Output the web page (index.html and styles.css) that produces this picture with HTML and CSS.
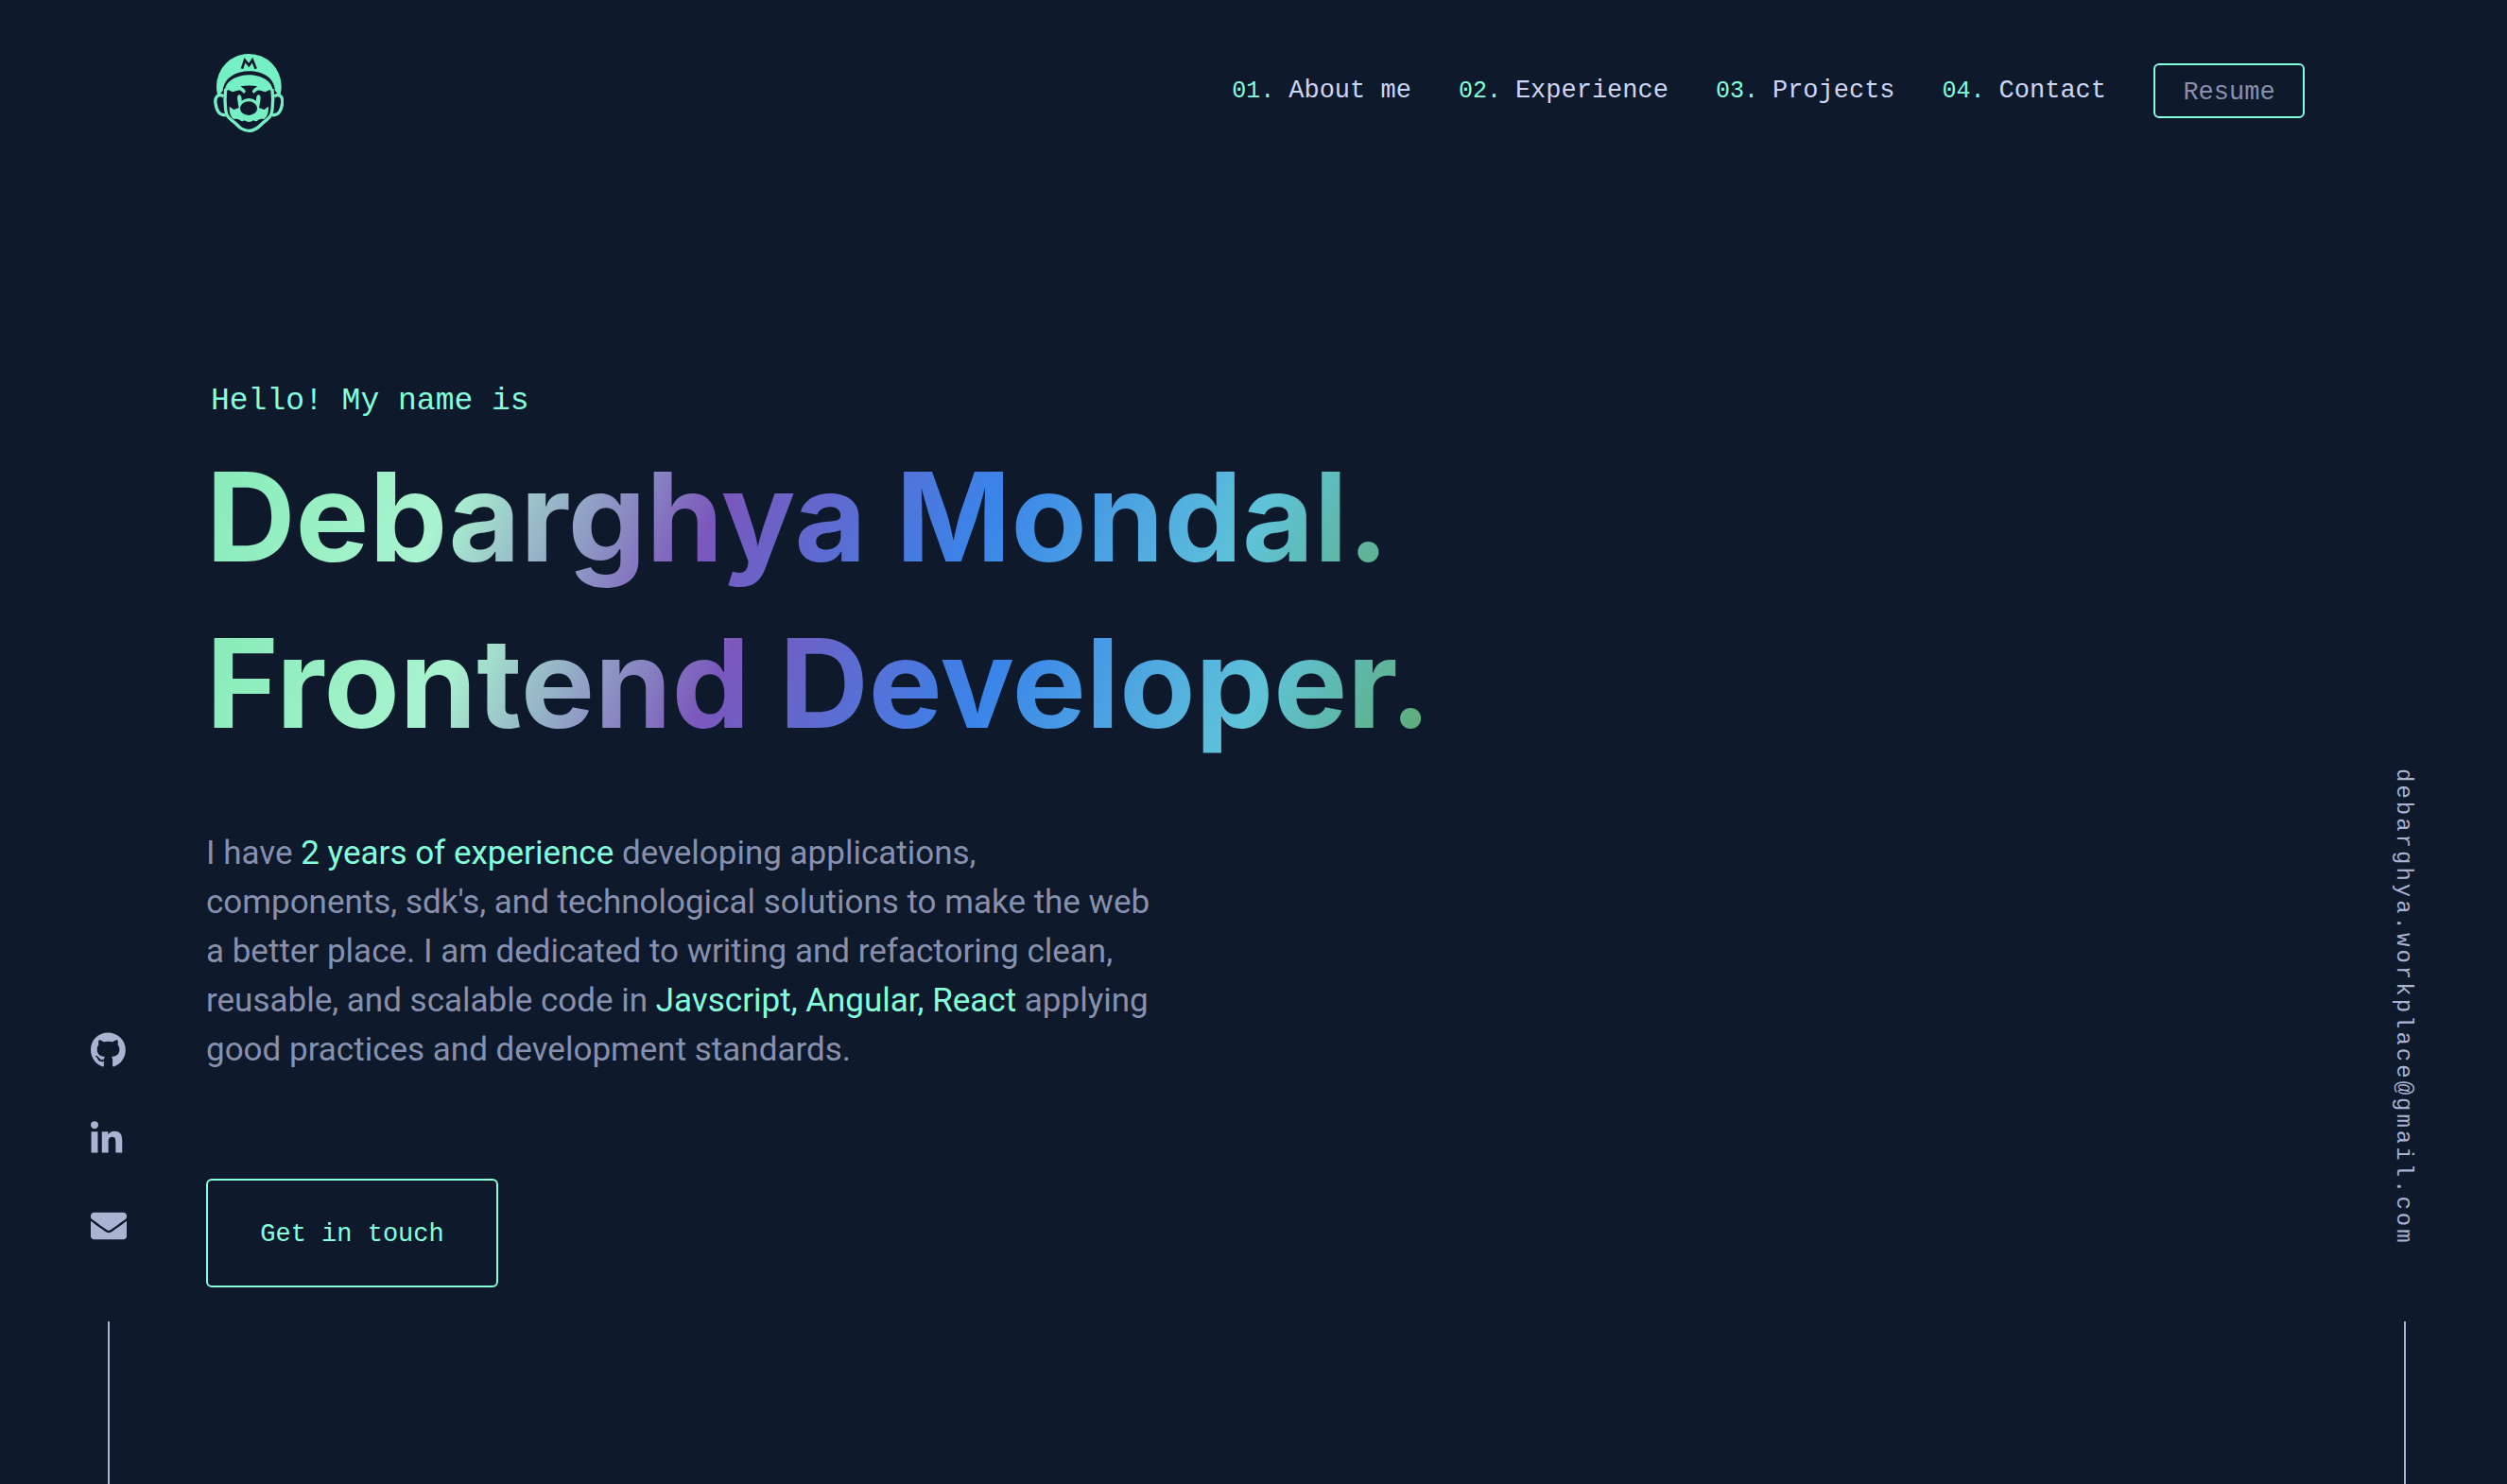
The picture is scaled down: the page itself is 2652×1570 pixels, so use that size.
FILE: index.html
```html
<!DOCTYPE html>
<html lang="en">
<head>
<meta charset="utf-8">
<title>Debarghya Mondal</title>
<link rel="stylesheet" href="styles.css">
</head>
<body class="page">
<aside class="rail rail-left" aria-label="Social links">
  <a href="#github" aria-label="GitHub"><svg class="icon" viewBox="0 0 512 512"><path d="M165.9 397.4c0 2-2.3 3.6-5.2 3.6-3.3.3-5.6-1.3-5.6-3.6 0-2 2.3-3.6 5.2-3.6 3-.3 5.6 1.3 5.6 3.6zm-31.1-4.5c-.7 2 1.3 4.3 4.3 4.9 2.6 1 5.6 0 6.2-2s-1.3-4.3-4.3-5.2c-2.6-.7-5.5.3-6.2 2.3zm44.2-1.7c-2.9.7-4.9 2.6-4.6 4.9.3 2 2.9 3.3 5.9 2.6 2.9-.7 4.9-2.6 4.6-4.6-.3-1.9-3-3.2-5.9-2.9zM244.8 8C106.1 8 0 113.3 0 252c0 110.9 69.8 205.8 169.5 239.2 12.8 2.3 17.3-5.6 17.3-12.1 0-6.2-.3-40.4-.3-61.4 0 0-70 15-84.7-29.8 0 0-11.4-29.1-27.8-36.6 0 0-22.9-15.7 1.6-15.4 0 0 24.9 2 38.6 25.8 21.9 38.6 58.6 27.5 72.9 20.9 2.3-16 8.8-27.1 16-33.7-55.9-6.2-112.3-14.3-112.3-110.5 0-27.5 7.6-41.3 23.6-58.9-2.6-6.5-11.1-33.3 2.6-67.9 20.9-6.5 69 27 69 27 20-5.6 41.5-8.5 62.8-8.5s42.8 2.9 62.8 8.5c0 0 48.1-33.6 69-27 13.7 34.7 5.2 61.4 2.6 67.9 16 17.7 25.8 31.5 25.8 58.9 0 96.5-58.9 104.2-114.8 110.5 9.2 7.9 17 22.9 17 46.4 0 33.7-.3 75.4-.3 83.6 0 6.5 4.6 14.4 17.3 12.1C428.2 457.8 496 362.9 496 252 496 113.3 383.5 8 244.8 8z"/></svg></a>
  <a href="#linkedin" aria-label="LinkedIn"><svg class="icon" viewBox="0 -16 512 512"><path d="M100.28 448H7.4V148.9h92.88zM53.79 108.1C24.09 108.1 0 83.5 0 53.8a53.79 53.79 0 0 1 107.58 0c0 29.7-24.1 54.3-53.79 54.3zM447.9 448h-92.68V302.4c0-34.7-.7-79.2-48.29-79.2-48.29 0-55.69 37.7-55.69 76.7V448h-92.78V148.9h89.08v40.8h1.3c12.4-23.5 42.69-48.3 87.88-48.3 94 0 111.28 61.9 111.28 142.3V448z"/></svg></a>
  <a href="#mail" aria-label="Email"><svg class="icon" viewBox="0 0 512 512"><path d="M502.3 190.8c3.9-3.1 9.7-.2 9.7 4.7V400c0 26.5-21.5 48-48 48H48c-26.5 0-48-21.5-48-48V195.6c0-5 5.7-7.8 9.7-4.7 22.4 17.4 52.1 39.5 154.1 113.6 21.1 15.4 56.7 47.8 92.2 47.6 35.7.3 72-32.8 92.3-47.6 102-74.1 131.6-96.3 154-113.7zM256 320c23.2.4 56.6-29.2 73.4-41.4 132.7-96.3 142.8-104.7 173.4-128.7 5.8-4.5 9.2-11.5 9.2-18.9v-19c0-26.5-21.5-48-48-48H48c-26.5 0-48 21.5-48 48v19c0 7.4 3.4 14.3 9.2 18.9 30.6 23.9 40.7 32.4 173.4 128.7 16.8 12.2 50.2 41.8 73.4 41.4z"/></svg></a>
  <span class="rail-line"></span>
</aside>
<div class="content">
  <header class="header">
    <a class="logo" href="#home" aria-label="Home">
      <svg class="logo-art" viewBox="48 46 222 255">
        <path d="M62 184C58 172 57 162 57 152A103 103 0 0 1 263 152C263 162 262 172 258 184L243 166C240 125 205 104 160 104C115 104 80 128 77 166Z"/>
        <path d="M84 166C84 136 120 116 160 116C200 116 234 136 236 166L224 164L212 170L196 165Q184 162 176 175L170 168Q176 158 187 152Q160 147 133 152Q144 158 150 168L144 175Q136 162 124 165L108 170L96 164Z"/>
        <path class="outline" d="M86 160L84 196C86 215 84 232 91 244C97 256 110 262 122 274C134 287 146 293 160 293C174 293 186 287 198 274C210 262 223 256 229 244C236 232 234 215 236 196L234 160"/>
        <path class="outline" d="M80 184C62 172 51 188 54 206C57 228 66 246 86 243M240 184C258 172 269 188 266 206C263 228 254 246 234 243"/>
        <path fill-rule="evenodd" d="M98 216L112 226L128 220L124 198C122 186 124 179 129 179C135 179 137 186 137 198Q146 190 160 190Q174 190 183 198C183 186 185 179 191 179C196 179 198 186 196 198L192 220L208 226L222 216C222 235 219 247 208 256Q198 254 190 258Q182 266 175 260Q160 270 145 260Q138 266 130 258Q122 254 112 256C101 247 98 235 98 216ZM132 222a27 22 0 1 0 54 0a27 22 0 1 0-54 0Z"/>
        <path class="cap-mark" d="M138 96L147 69L160 85L171 69L182 96"/>
      </svg>
    </a>
    <nav class="nav">
      <a class="nav-link" href="#about"><span class="nav-number">01. </span>About me</a>
      <a class="nav-link" href="#experience"><span class="nav-number">02. </span>Experience</a>
      <a class="nav-link" href="#projects"><span class="nav-number">03. </span>Projects</a>
      <a class="nav-link" href="#contact"><span class="nav-number">04. </span>Contact</a>
      <button class="resume" type="button">Resume</button>
    </nav>
  </header>
  <main class="hero">
    <p class="greeting">Hello! My name is</p>
    <h1 class="title">Debarghya Mondal.</h1>
    <h2 class="title">Frontend Developer.</h2>
    <p class="intro">I have <span class="accent">2 years of experience</span> developing applications,<br>components, sdk's, and technological solutions to make the web<br>a better place. I am dedicated to writing and refactoring clean,<br>reusable, and scalable code in <span class="accent">Javscript, Angular, React</span> applying<br>good practices and development standards.</p>
    <button class="contact" type="button">Get in touch</button>
  </main>
</div>
<aside class="rail rail-right" aria-label="Email address">
  <a class="email" href="mailto:debarghya.workplace@gmail.com">debarghya.workplace@gmail.com</a>
  <span class="rail-line"></span>
</aside>
</body>
</html>
```
FILE: styles.css
```css
:root {
  --navy: #0e192c;
  --green: #84ffdc;
  --slate: #8790ad;
  --light-slate: #aab3d1;
  --lightest-slate: #ccd6f5;
  --mono: "Liberation Mono", monospace;
  --sans: Roboto, "Liberation Sans", sans-serif;
  --display: Inter, "Liberation Sans", sans-serif;
}

* { box-sizing: border-box; }

.page {
  display: grid;
  grid-template-columns: 218px 1fr 214px;
  min-height: 100vh;
  margin: 0;
  background: var(--navy);
  color: var(--slate);
  font-family: var(--sans);
}

a { color: inherit; text-decoration: none; }

.rail {
  display: flex;
  flex-direction: column;
  align-items: center;
  justify-content: flex-end;
  color: var(--light-slate);
}

.rail-left { gap: 55px; padding-left: 12px; }
.rail-right { gap: 80px; padding-right: 2px; }
.rail-left .rail-line { margin-top: 27px; }
.rail-line { width: 2px; height: 172px; background: currentColor; }
.icon { display: block; width: 38px; height: 38px; fill: currentColor; }

.email {
  padding-right: 4px;
  writing-mode: vertical-rl;
  font: 24px/32px var(--mono);
  letter-spacing: 3px;
}

.header {
  display: flex;
  align-items: flex-start;
  justify-content: space-between;
  padding: 56px 0 0 8px;
}

.logo-art { display: block; width: 74px; height: 85px; fill: #75f0c5; }
.outline { fill: none; stroke: #75f0c5; stroke-width: 10; }
.cap-mark { fill: none; stroke: var(--navy); stroke-width: 8; }

.nav { display: flex; align-items: center; gap: 50px; padding-top: 11px; }

.nav-link {
  color: var(--lightest-slate);
  font: 27px/32px var(--mono);
  white-space: pre;
}

.nav-number { color: var(--green); font-size: 25px; }

.resume,
.contact {
  padding: 3px 0 0;
  border: 2px solid var(--green);
  border-radius: 6px;
  background: transparent;
  font: 27px/32px var(--mono);
}

.resume { width: 160px; height: 58px; color: var(--slate); }
.contact { width: 309px; height: 115px; color: var(--green); }

.hero { padding-top: 262px; }

.greeting {
  margin: 0 0 12px;
  padding-left: 5px;
  color: var(--green);
  font: 33px/44px var(--mono);
}

.title {
  max-width: 1364px;
  margin: 0;
  background: linear-gradient(115deg, #84ebb7, #a9f3cf, #7b57bc, #3a84ea, #5fc3d8, #5fa04b);
  background-clip: text;
  color: transparent;
  font-family: var(--display);
  font-size: 131px;
  font-weight: 700;
  line-height: 176px;
}

.intro {
  margin: 66px 0 110px;
  font-size: 35px;
  line-height: 52px;
}

.accent { color: var(--green); }
```
